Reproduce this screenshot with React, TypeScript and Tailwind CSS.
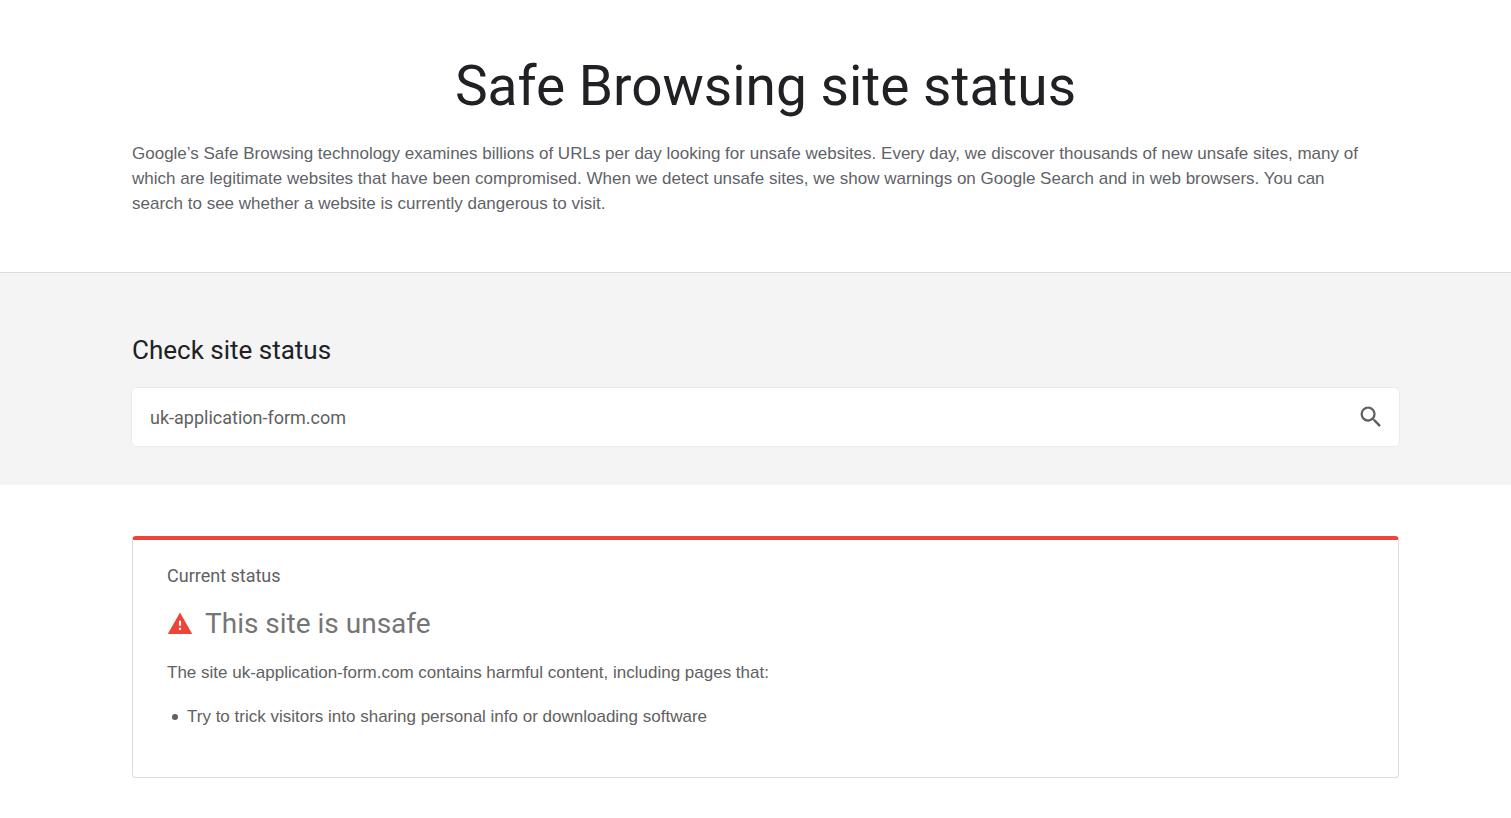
import { useState } from 'react';

const threats = ['Try to trick visitors into sharing personal info or downloading software'];

function SearchIcon() {
  return (
    <svg viewBox="0 0 24 24" className="h-7 w-7" fill="#616161" aria-hidden="true">
      <path d="M15.5 14h-.79l-.28-.27A6.471 6.471 0 0 0 16 9.5 6.5 6.5 0 1 0 9.5 16c1.61 0 3.09-.59 4.23-1.57l.27.28v.79l5 4.99L20.49 19l-4.99-5zm-6 0C7.01 14 5 11.99 5 9.5S7.01 5 9.5 5 14 7.01 14 9.5 11.99 14 9.5 14z" />
    </svg>
  );
}

function WarningIcon() {
  return (
    <svg viewBox="0 0 24 24" className="h-[26px] w-[26px]" fill="#f04337" aria-hidden="true">
      <path d="M.7 21.3h22.6L12 1.3.7 21.3zM13 17.5h-2v-2h2v2zm0-4h-2v-4.5h2v4.5z" />
    </svg>
  );
}

export default function App() {
  const [site, setSite] = useState('uk-application-form.com');

  return (
    <main className="min-h-screen bg-white font-['Liberation_Sans',Arial,sans-serif] text-[17px] leading-[25px] text-[#616161]">
      <header className="border-b border-[#dadce0] pt-[51px] pr-[112px] pb-14 pl-[132px]">
        <h1 className="text-center font-[Roboto,sans-serif] text-[55px] leading-[70px] text-[#202124]">
          Safe Browsing site status
        </h1>
        <p className="mt-5 max-w-[1240px] text-[#5f6368]">
          Google’s Safe Browsing technology examines billions of URLs per day looking for unsafe websites. Every day, we
          discover thousands of new unsafe sites, many of which are legitimate websites that have been compromised. When
          we detect unsafe sites, we show warnings on Google Search and in web browsers. You can search to see whether a
          website is currently dangerous to visit.
        </p>
      </header>

      <section className="bg-[#f4f4f4] pt-[61px] pr-[112px] pb-[38px] pl-[132px]">
        <form onSubmit={e => e.preventDefault()}>
          <label htmlFor="site" className="block font-[Roboto,sans-serif] text-[26px] leading-8 text-[#202124]">
            Check site status
          </label>
          <div className="-mx-px mt-[21px] flex h-[60px] items-center rounded-md border border-[#ebebeb] bg-white pr-3.5 pl-[18px]">
            <input
              id="site"
              value={site}
              onChange={e => setSite(e.target.value)}
              className="min-w-0 flex-1 bg-transparent font-[Roboto,sans-serif] text-[18px] leading-[25px] outline-none"
            />
            <button type="submit" aria-label="Search" className="cursor-pointer">
              <SearchIcon />
            </button>
          </div>
        </form>
      </section>

      {/* Result */}
      <section className="pt-[51px] pr-[112px] pb-10 pl-[132px]">
        <div className="rounded border border-t-4 border-[#dadce0] border-t-[#f04337] px-[34px] pt-[23px] pb-12">
          <h2 className="font-[Roboto,sans-serif] text-[18px] leading-[25px]">Current status</h2>
          <div className="mt-5 flex items-center gap-3">
            <WarningIcon />
            <p className="font-[Roboto,sans-serif] text-[28px] leading-8 text-[#757575]">This site is unsafe</p>
          </div>
          <p className="mt-5">The site {site} contains harmful content, including pages that:</p>
          <ul className="mt-[19px]">
            {threats.map(t => (
              <li key={t} className="flex items-center gap-2 pl-1">
                <span className="mx-px h-1.5 w-1.5 rounded-full bg-[#616161]" />
                {t}
              </li>
            ))}
          </ul>
        </div>
      </section>
    </main>
  );
}
